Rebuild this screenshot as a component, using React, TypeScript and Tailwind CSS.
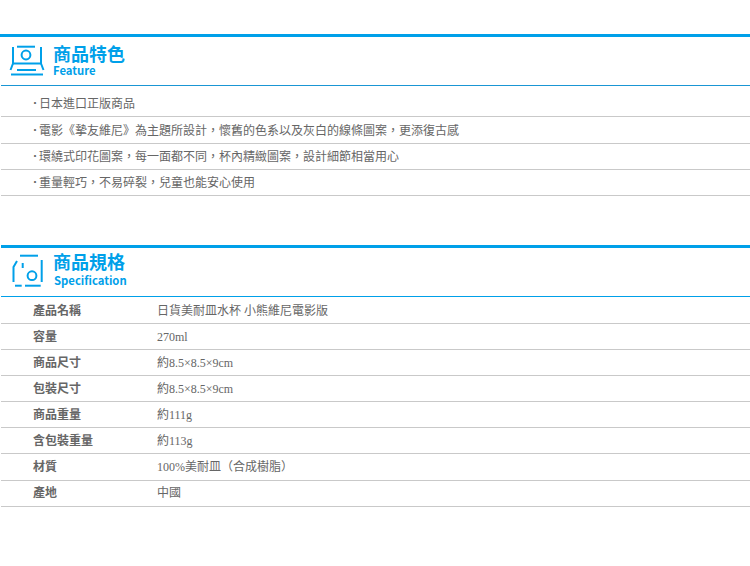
const features = [
  { text: "日本進口正版商品", cls: "h-[31px] pt-[5px]" },
  { text: "電影《摯友維尼》為主題所設計，懷舊的色系以及灰白的線條圖案，更添復古感", cls: "h-[27px] pt-px" },
  { text: "環繞式印花圖案，每一面都不同，杯內精緻圖案，設計細節相當用心", cls: "h-[26px]" },
  { text: "重量輕巧，不易碎裂，兒童也能安心使用", cls: "h-[26px]" },
];
const specs = [
  { k: "產品名稱", v: "日貨美耐皿水杯 小熊維尼電影版", cls: "h-[27px] pt-[2px]" },
  { k: "容量", v: "270ml", cls: "h-[26px] pt-px" },
  { k: "商品尺寸", v: "約8.5×8.5×9cm", cls: "h-[26px] pt-px" },
  { k: "包裝尺寸", v: "約8.5×8.5×9cm", cls: "h-[26px] pt-px" },
  { k: "商品重量", v: "約111g", cls: "h-[26px] pt-px" },
  { k: "含包裝重量", v: "約113g", cls: "h-[26px]" },
  { k: "材質", v: "100%美耐皿（合成樹脂）", cls: "h-[27px]" },
  { k: "產地", v: "中國", cls: "h-[26px] pb-px" },
];

function FeatureIcon() {
  return (
    <svg width="38" height="34" viewBox="0 0 38 34" fill="none" stroke="#00a0e9" strokeWidth="2" className="ml-[8px] mt-[7px] shrink-0">
      <path d="M8 2.700h18" />
      <path d="M4 3v16.500h28V3" />
      <path d="M4 19.500L1.500 26" />
      <path d="M32 19.500L34.500 26" />
      <circle cx="17" cy="11" r="4.400" />
      <path d="M8 26h19" />
      <path d="M2 30.500h32" />
    </svg>
  );
}

function SpecIcon() {
  return (
    <svg width="34" height="36" viewBox="0 0 34 36" fill="none" stroke="#00a0e9" strokeWidth="2" className="ml-[10px] mt-[5px] shrink-0">
      <path d="M9 2.700h18" />
      <path d="M30.700 7v22" />
      <path d="M2.500 29V14L6 8" />
      <path d="M11.700 10v5" />
      <circle cx="21" cy="22.700" r="4.400" />
      <path d="M4 32.700h6.700" />
      <path d="M14 32.700h15.700" />
    </svg>
  );
}

function Heading({ icon, title, sub, lineCls, textCls, subCls }: { icon: React.ReactNode; title: string; sub: string; lineCls: string; textCls: string; subCls: string }) {
  return (
    <div className={`flex items-start border-b h-[49px] ${lineCls}`}>
      <div className="w-[52px] shrink-0">{icon}</div>
      <div className={`flex flex-col font-['Noto_Sans_CJK_TC',sans-serif] font-bold text-[#00a0e9] ${textCls}`}>
        <span className="text-[18px] leading-[20px]">{title}</span>
        <span className={`text-[11.300px] leading-[14px] ${subCls}`}>{sub}</span>
      </div>
    </div>
  );
}

export default function App() {
  return (
    <div className="w-[750px] h-[566px] bg-white overflow-hidden pt-[34px] font-['Liberation_Serif','Noto_Sans_CJK_TC',serif] text-[12px] text-[#666666]">
      <section>
        <div className="h-[3px] bg-[#00a0e9]" />
        <div className="pl-px">
          <Heading icon={<FeatureIcon />} title="商品特色" sub="Feature" lineCls="border-[#1a96d4]" textCls="mt-[6px]" subCls="" />
          <ul>
            {features.map((f) => (
              <li key={f.text} className={`flex items-center border-b border-[#c9c9c9] pl-[29px] ${f.cls}`}>
                <span className="w-[9px] text-[10px]">‧</span>
                <span>{f.text}</span>
              </li>
            ))}
          </ul>
        </div>
      </section>
      <section className="mt-[49px] pl-px">
        <div className="h-[3px] bg-[#00a0e9]" />
        <Heading icon={<SpecIcon />} title="商品規格" sub="Specification" lineCls="border-[#00a0e9]" textCls="mt-[3px]" subCls="mt-[2px] ml-px" />
        <div>
          {specs.map((s) => (
            <div key={s.k} className={`flex items-center border-b border-[#c9c9c9] ${s.cls}`}>
              <span className="w-[156px] pl-[32px] font-bold shrink-0">{s.k}</span>
              <span>{s.v}</span>
            </div>
          ))}
        </div>
      </section>
    </div>
  );
}
